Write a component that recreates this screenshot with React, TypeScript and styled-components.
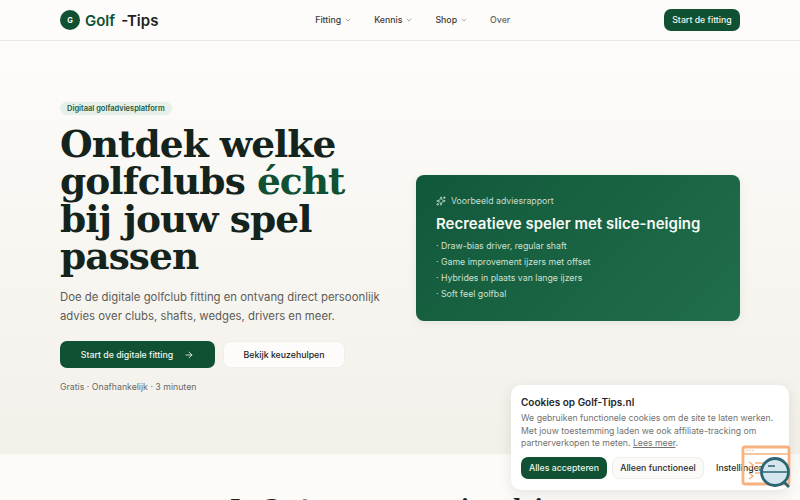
import React from "react";
import styled, { createGlobalStyle } from "styled-components";
import { ChevronDown, ArrowRight, Sparkles } from "lucide-react";

const Global = createGlobalStyle`
  html, body { margin: 0; padding: 0; height: 100%; overflow: hidden; background: #fcfbf8; }
  * { box-sizing: border-box; }
  body { font-family: Inter, "Liberation Sans", sans-serif; color: #1c1c1a; }
`;

const Page = styled.div`
  position: relative;
  width: 800px;
  height: 500px;
  overflow: hidden;
`;

const Header = styled.header`
  height: 41px;
  border-bottom: 1px solid #ebe9e5;
  background: #fdfcfa;
  padding: 0 60px;
  display: flex;
  justify-content: space-between;
  align-items: center;
`;

const Logo = styled.a`
  display: flex;
  align-items: center;
  gap: 5px;
  font-size: 15px;
  font-weight: 600;
  color: #22211f;
`;

const LogoMark = styled.span`
  width: 20px;
  height: 20px;
  border-radius: 50%;
  background: #0f5132;
  color: #fdfcfa;
  font-size: 7.5px;
  font-weight: 700;
  display: flex;
  align-items: center;
  justify-content: center;
`;

const LogoGolf = styled.span`
  color: #0f5132;
  margin-right: 6px;
`;

const Nav = styled.nav`
  display: flex;
  align-items: center;
  gap: 22.5px;
  padding-left: 3px;
`;

const NavItem = styled.span<{ $muted?: boolean }>`
  display: flex;
  align-items: center;
  gap: 2.5px;
  font-size: 8.75px;
  font-weight: 500;
  color: ${(p) => (p.$muted ? "#66645f" : "#3b3a37")};
  svg { color: #85837e; }
`;

const HeaderCta = styled.button`
  height: 22.5px;
  width: 76px;
  padding: 0;
  border: 0;
  border-radius: 7px;
  background: #0f5132;
  color: #f4f7f3;
  font: 500 8.75px Inter, sans-serif;
`;

const Hero = styled.section`
  height: 413px;
  padding: 0 60px;
  background: linear-gradient(180deg, #fdfcf9 0%, #f3f0ea 100%);
  display: grid;
  grid-template-columns: minmax(0, 1fr) 324px;
  column-gap: 32px;
  align-items: center;
`;

const HeroCopy = styled.div`
  display: flex;
  flex-direction: column;
  align-items: flex-start;
`;

const Badge = styled.span`
  height: 13px;
  padding: 0 7px;
  border-radius: 7px;
  background: #e6efe8;
  color: #215c41;
  font-size: 7.5px;
  font-weight: 600;
  line-height: 13px;
`;

const Title = styled.h1`
  margin: 10.5px 0 0;
  font: 700 37.5px/37.5px "DejaVu Serif", serif;
  letter-spacing: -0.94px;
  color: #14231c;
`;

const Accent = styled.span`
  color: #0f5132;
`;

const Lead = styled.p`
  margin: 12px 0 0;
  font-size: 11.35px;
  line-height: 18.75px;
  color: #5d5b56;
  width: 330px;
`;

const Actions = styled.div`
  display: flex;
  gap: 8px;
  margin-top: 15.5px;
`;

const PrimaryButton = styled.button`
  width: 155px;
  height: 27.5px;
  border: 0;
  border-radius: 7px;
  background: #0f5132;
  color: #f2f6f2;
  font: 500 8.75px Inter, sans-serif;
  display: flex;
  align-items: center;
  justify-content: center;
  gap: 11px;
`;

const SecondaryButton = styled.button`
  width: 122px;
  height: 27.5px;
  border: 1px solid #f0eeea;
  border-radius: 7px;
  background: #fdfcfa;
  color: #22211f;
  font: 500 8.75px Inter, sans-serif;
`;

const Note = styled.p`
  margin: 12.5px 0 0;
  font-size: 8.75px;
  line-height: 12px;
  color: #6b6964;
`;

const Report = styled.aside`
  height: 146px;
  padding: 20px;
  border-radius: 8px;
  background: linear-gradient(135deg, #11583a 0%, #216e4b 100%);
  box-shadow: 0 2px 8px rgba(20, 60, 40, 0.08);
`;

const ReportLabel = styled.div`
  display: flex;
  align-items: center;
  gap: 5px;
  font-size: 8.75px;
  line-height: 12px;
  color: #c9dccf;
`;

const ReportTitle = styled.h2`
  margin: 7px 0 4px;
  font-size: 15px;
  line-height: 20px;
  font-weight: 600;
  color: #f6f9f6;
`;

const ReportList = styled.ul`
  list-style: none;
  margin: 0;
  padding: 0;
  font-size: 8.75px;
  line-height: 16.25px;
  color: #cfe0d5;
`;

const Section = styled.section`
  height: 60px;
  background: #fcfbf8;
  padding-top: 34px;
  text-align: center;
`;

const SectionTitle = styled.h2`
  margin: 0;
  font: 700 22.5px/38px "DejaVu Serif", serif;
  color: #14231c;
`;

const Cookie = styled.div`
  position: absolute;
  left: 511px;
  top: 385px;
  width: 278px;
  height: 105px;
  padding: 10px;
  border-radius: 10px;
  background: #fff;
  box-shadow: 0 4px 14px rgba(30, 30, 20, 0.1);
`;

const CookieTitle = styled.h3`
  margin: 0 0 3px;
  font-size: 10px;
  line-height: 14px;
  font-weight: 600;
  color: #27262a;
`;

const CookieText = styled.p`
  margin: 0;
  font-size: 8.7px;
  line-height: 12.6px;
  color: #74726d;
  a { color: inherit; text-decoration: underline; }
`;

const CookieActions = styled.div`
  display: flex;
  align-items: center;
  gap: 5px;
  margin-top: 7px;
`;

const Accept = styled.button`
  width: 86px;
  height: 22px;
  padding: 0;
  border: 0;
  border-radius: 7px;
  background: #0f5132;
  color: #eef4ef;
  font: 500 8.75px Inter, sans-serif;
`;

const Functional = styled.button`
  width: 92px;
  height: 22px;
  padding: 0;
  border: 1px solid #f0eeea;
  border-radius: 7px;
  background: #fbfaf8;
  color: #2a2927;
  font: 500 8.75px Inter, sans-serif;
`;

const SettingsLink = styled.span`
  margin-left: 7px;
  font-size: 8.75px;
  font-weight: 500;
  color: #2a2927;
  white-space: nowrap;
`;

const Widget = styled.svg`
  position: absolute;
  left: 741px;
  top: 445px;
`;

export default function App() {
  return (
    <Page>
      <Global />
      <Header>
        <Logo>
          <LogoMark>G</LogoMark>
          <span><LogoGolf>Golf</LogoGolf>-Tips</span>
        </Logo>
        <Nav>
          <NavItem>Fitting <ChevronDown size={8} /></NavItem>
          <NavItem>Kennis <ChevronDown size={8} /></NavItem>
          <NavItem>Shop <ChevronDown size={8} /></NavItem>
          <NavItem $muted>Over</NavItem>
        </Nav>
        <HeaderCta>Start de fitting</HeaderCta>
      </Header>
      <Hero>
        <HeroCopy>
          <Badge>Digitaal golfadviesplatform</Badge>
          <Title>
            Ontdek welke<br />
            golfclubs <Accent>écht</Accent><br />
            bij jouw spel<br />
            passen
          </Title>
          <Lead>Doe de digitale golfclub fitting en ontvang direct persoonlijk advies over clubs, shafts, wedges, drivers en meer.</Lead>
          <Actions>
            <PrimaryButton>Start de digitale fitting <ArrowRight size={10} /></PrimaryButton>
            <SecondaryButton>Bekijk keuzehulpen</SecondaryButton>
          </Actions>
          <Note>Gratis · Onafhankelijk · 3 minuten</Note>
        </HeroCopy>
        <Report>
          <ReportLabel><Sparkles size={10} /> Voorbeeld adviesrapport</ReportLabel>
          <ReportTitle>Recreatieve speler met slice-neiging</ReportTitle>
          <ReportList>
            <li>· Draw-bias driver, regular shaft</li>
            <li>· Game improvement ijzers met offset</li>
            <li>· Hybrides in plaats van lange ijzers</li>
            <li>· Soft feel golfbal</li>
          </ReportList>
        </Report>
      </Hero>
      <Section>
        <SectionTitle>In 3 stappen naar je advies</SectionTitle>
      </Section>
      <Cookie>
        <CookieTitle>Cookies op Golf-Tips.nl</CookieTitle>
        <CookieText>
          We gebruiken functionele cookies om de site te laten werken. Met jouw toestemming laden we ook affiliate-tracking om partnerverkopen te meten. <a>Lees meer</a>.
        </CookieText>
        <CookieActions>
          <Accept>Alles accepteren</Accept>
          <Functional>Alleen functioneel</Functional>
          <SettingsLink>Instellingen</SettingsLink>
        </CookieActions>
      </Cookie>
      <Widget width="50" height="44" viewBox="0 0 50 44">
        <rect x="2" y="2" width="46" height="37" rx="2" fill="none" stroke="#f5b27e" strokeWidth="2.8" />
        <line x1="2" y1="9" x2="48" y2="9" stroke="#f5b27e" strokeWidth="1.5" />
        <circle cx="6" cy="5.5" r="0.7" fill="#f4a970" />
        <circle cx="9" cy="5.5" r="0.7" fill="#f4a970" />
        <circle cx="12" cy="5.5" r="0.7" fill="#f4a970" />
        <path d="M8 17l4 3-4 3M8 28l4 3-4 3" fill="none" stroke="#f5b27e" strokeWidth="1.5" />
        <path d="M14 18h12M14 23h8M14 28h8" stroke="#f5b27e" strokeWidth="1.5" />
        <circle cx="34" cy="27" r="13.5" fill="#d5e6ee" stroke="#2c6573" strokeWidth="2.8" />
        <line x1="43" y1="37" x2="48" y2="42" stroke="#2c6573" strokeWidth="2.8" />
        <path d="M27 21h7M22 27h24" stroke="#2c6573" strokeWidth="1.6" />
      </Widget>
    </Page>
  );
}
